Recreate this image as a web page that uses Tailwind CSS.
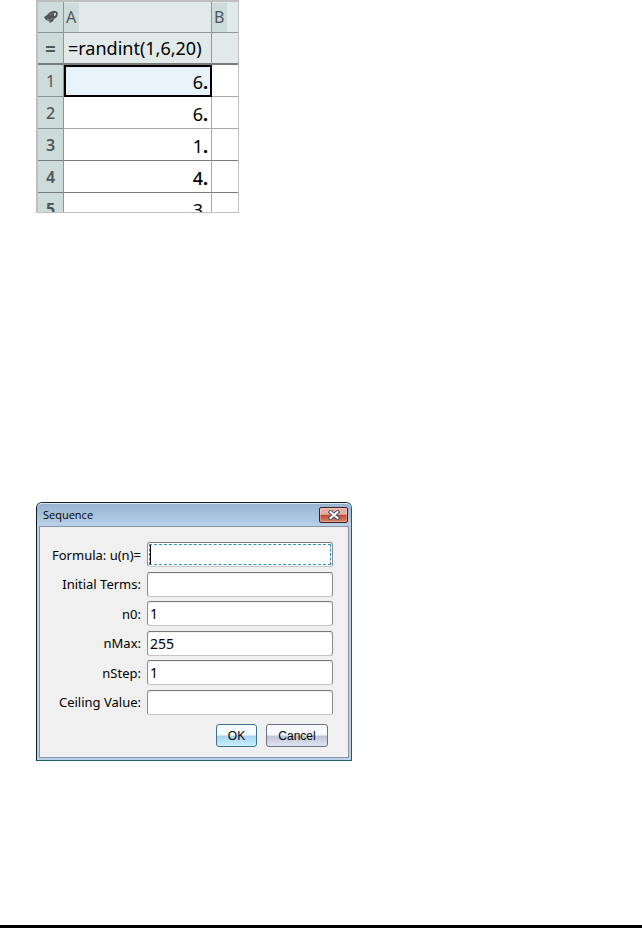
<!DOCTYPE html>
<html lang="en">
<head>
  <meta charset="UTF-8">
  <meta name="viewport" content="width=device-width, initial-scale=1.0">
  <title>Sequence</title>
  <script src="https://cdn.jsdelivr.net/npm/@tailwindcss/browser@4"></script>
</head>
<body class="bg-white text-black min-h-screen flex flex-col font-['Noto_Sans',sans-serif]">

  <main class="grow pl-9">

    <!-- Spreadsheet -->
    <div class="w-[203px] h-[213px] overflow-hidden border-t-2 border-l-2 border-r border-b border-[#bfbfbf]">
      <table class="w-full table-fixed border-separate border-spacing-0">
        <colgroup>
          <col class="w-[26px]">
          <col class="w-[148px]">
          <col>
        </colgroup>
        <thead>
          <tr class="h-[31px] text-left text-base leading-5 text-[#505557]">
            <th class="p-0 bg-[#cddbda] border-b border-r border-[#8f9696]">
              <svg class="mx-auto w-[14px] h-3" viewBox="0 0 14 12" aria-label="Lists">
                <path d="M0 6L3 4L6 1L9 0L12 0L14 2L13 6L10 8L9 10L6 12L5 10L2 9Z" fill="#505557"/>
                <path d="M10 2h2v1l-1 2h-1z" fill="#cddbda"/>
                <path d="M6 4l3-2M3 8l3 1 3-2" fill="none" stroke="#7f8a8b"/>
              </svg>
            </th>
            <th class="p-0 bg-[#e1eae9] border-b border-r border-[#8f9696] font-normal">
              <div class="flex items-center w-[15px] h-[29px] pl-0.5 bg-[#cddbda]">A</div>
            </th>
            <th class="p-0 bg-[#e1eae9] border-b border-[#8f9696] font-normal">
              <div class="flex items-center w-[15px] h-[29px] pl-0.5 bg-[#cddbda]">B</div>
            </th>
          </tr>
          <tr class="h-8">
            <th class="p-0 bg-[#cddbda] border-b-2 border-r border-b-[#777d7d] border-r-[#8f9696] text-lg leading-5 font-extrabold text-[#505557]">=</th>
            <td class="p-0 pl-1 bg-[#e1eae9] border-b-2 border-r border-b-[#777d7d] border-r-[#8f9696] text-lg leading-5 whitespace-nowrap">=randint(1,6,20)</td>
            <td class="p-0 bg-[#e1eae9] border-b-2 border-[#777d7d]"></td>
          </tr>
        </thead>
        <tbody class="text-right text-lg leading-5">
          <tr class="h-8">
            <th class="p-0 bg-[#cddbda] border-b border-r border-[#8f9696] text-center text-base leading-5 font-normal text-[#505557]">1</th>
            <td class="p-0 pt-0.5 pr-0.5 bg-[#e8f2fa] border-2 border-black">6<span class="font-bold">.</span></td>
            <td class="p-0 border-b border-[#a5abab]"></td>
          </tr>
          <tr class="h-8">
            <th class="p-0 bg-[#cddbda] border-b border-r border-[#8f9696] text-center text-base leading-5 font-medium text-[#505557]">2</th>
            <td class="p-0 pt-0.5 pr-[3px] border-b border-r border-[#a5abab]">6<span class="font-bold">.</span></td>
            <td class="p-0 border-b border-[#a5abab]"></td>
          </tr>
          <tr class="h-8">
            <th class="p-0 bg-[#cddbda] border-b border-r border-b-[#777d7d] border-r-[#8f9696] text-center text-base leading-5 font-semibold text-[#505557]">3</th>
            <td class="p-0 pt-0.5 pr-[3px] border-b border-r border-b-[#777d7d] border-r-[#a5abab]">1<span class="font-bold">.</span></td>
            <td class="p-0 border-b border-[#777d7d]"></td>
          </tr>
          <tr class="h-8">
            <th class="p-0 bg-[#cddbda] border-b border-r border-b-[#777d7d] border-r-[#8f9696] text-center text-base leading-5 font-semibold text-[#505557]">4</th>
            <td class="p-0 pt-0.5 pr-[3px] border-b border-r border-b-[#777d7d] border-r-[#a5abab] font-medium">4<span class="font-bold">.</span></td>
            <td class="p-0 border-b border-[#777d7d]"></td>
          </tr>
          <tr class="h-8">
            <th class="p-0 bg-[#cddbda] border-b border-r border-[#8f9696] text-center text-base leading-5 font-bold text-[#505557]">5</th>
            <td class="p-0 pt-0.5 pr-[3px] border-b border-r border-[#a5abab]">3<span class="font-bold">.</span></td>
            <td class="p-0 border-b border-[#a5abab]"></td>
          </tr>
        </tbody>
      </table>
    </div>

    <!-- Sequence dialog -->
    <form class="mt-[289px] w-[316px] rounded-t-md border border-t-[#1c2429] border-l-[#101820] border-r-[#176070] border-b-[#176070] bg-[#b9d1ea] px-0.5 pb-0.5" role="dialog" aria-labelledby="dialogTitle">
      <div class="-mx-0.5 pl-1.5 pr-[3px] h-[23px] flex items-center justify-between rounded-t-[5px] border-t border-[#d8e6f2] bg-linear-to-b from-[#98b4d2] to-[#b9d1ea]">
        <h2 id="dialogTitle" class="font-['Open_Sans',sans-serif] text-[11px] leading-4">Sequence</h2>
        <button type="button" class="w-[29px] h-4 flex items-center justify-center rounded-xs border border-[#4a1a22] bg-linear-to-b from-[#e8aea4] from-45% via-[#bf4630] via-50% to-[#d8836c] inset-ring inset-ring-white/30" aria-label="Close">
          <svg class="w-3 h-[10px]" viewBox="0 0 12 10">
            <path d="M2.5 2l7 6M9.5 2l-7 6" stroke="#4b5260" stroke-width="4" stroke-linecap="square"/>
            <path d="M2.5 2l7 6M9.5 2l-7 6" stroke="#fff" stroke-width="2" stroke-linecap="square"/>
          </svg>
        </button>
      </div>

      <div class="border border-[#8b949e] bg-[#f0f0f0] pt-[15px] pr-[15px] pb-[10px] pl-2 text-sm leading-5">
        <div class="grid grid-cols-[auto_186px] justify-end items-center content-between gap-x-1.5 h-[173px] text-right text-[13px] whitespace-nowrap">
          <label for="formula">Formula: u(n)=</label>
          <!-- focused field: dotted frame and caret -->
          <div class="relative h-[25px] before:absolute before:left-[3px] before:top-[3px] before:h-[19px] before:w-px before:bg-black">
            <input type="text" id="formula" class="block w-full h-[25px] px-0.5 text-sm rounded-[3px] border border-t-[#77777d] border-x-[#8b8b90] border-b-[#c4c4c4] bg-white outline outline-dashed outline-[#2c93b8] -outline-offset-3">
          </div>
          <label for="terms">Initial Terms:</label>
          <input type="text" id="terms" class="w-full h-[25px] px-0.5 text-sm rounded-[3px] border border-t-[#77777d] border-x-[#8b8b90] border-b-[#c4c4c4] bg-white inset-shadow-2xs">
          <label for="n0">n0:</label>
          <input type="text" id="n0" value="1" class="w-full h-[25px] px-0.5 text-sm rounded-[3px] border border-t-[#77777d] border-x-[#8b8b90] border-b-[#c4c4c4] bg-white inset-shadow-2xs">
          <label for="nMax">nMax:</label>
          <input type="text" id="nMax" value="255" class="w-full h-[25px] px-0.5 text-sm rounded-[3px] border border-t-[#77777d] border-x-[#8b8b90] border-b-[#c4c4c4] bg-white inset-shadow-2xs">
          <label for="nStep">nStep:</label>
          <input type="text" id="nStep" value="1" class="w-full h-[25px] px-0.5 text-sm rounded-[3px] border border-t-[#77777d] border-x-[#8b8b90] border-b-[#c4c4c4] bg-white inset-shadow-2xs">
          <label for="ceiling">Ceiling Value:</label>
          <input type="text" id="ceiling" class="w-full h-[25px] px-0.5 text-sm rounded-[3px] border border-t-[#77777d] border-x-[#8b8b90] border-b-[#c4c4c4] bg-white inset-shadow-2xs">
        </div>

        <div class="mt-[9px] pr-[5px] flex justify-end gap-[9px] font-['Liberation_Sans',sans-serif] text-xs">
          <button type="button" class="w-[41px] h-[23px] rounded-[3px] border border-[#3f7290] bg-linear-to-b from-[#f4fbff] from-45% via-[#a6d5ee] via-55% to-[#c9f0ff]">OK</button>
          <button type="button" class="w-[62px] h-[23px] rounded-[3px] border border-[#6c6f85] bg-linear-to-b from-[#f8f9fc] from-45% via-[#bfc4d6] via-55% to-[#e1e6f4]">Cancel</button>
        </div>
      </div>
    </form>
  </main>

  <footer class="h-[3px] bg-black"></footer>

</body>
</html>
